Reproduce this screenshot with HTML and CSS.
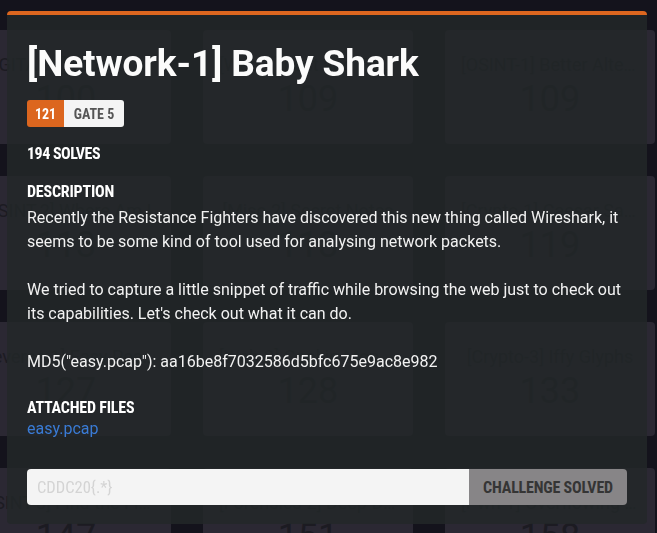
FILE: index.html
```html
<!DOCTYPE html>
<html lang="en">
<head>
<meta charset="utf-8">
<title>[Network-1] Baby Shark</title>
<link rel="stylesheet" href="styles.css">
</head>
<body>
<div class="board">
  <div class="card"><div class="c-title">[DIGITAL-1] Hidden Mess...</div><div class="c-pts">100</div></div>
  <div class="card"><div class="c-title">[Web-1] Lost and Found</div><div class="c-pts">109</div></div>
  <div class="card"><div class="c-title">[OSINT-1] Better Alter...</div><div class="c-pts">109</div></div>
  <div class="card"><div class="c-title">[OSINT-2] Where Am I</div><div class="c-pts">113</div></div>
  <div class="card"><div class="c-title">[Misc-2] Secret Notes</div><div class="c-pts">118</div></div>
  <div class="card"><div class="c-title">[Crypto-1] Caesar Salad</div><div class="c-pts">119</div></div>
  <div class="card"><div class="c-title">[Reverse-1] Easy Peasy</div><div class="c-pts">127</div></div>
  <div class="card"><div class="c-title">[Web-2] Cookie Monster</div><div class="c-pts">128</div></div>
  <div class="card"><div class="c-title">[Crypto-3] Iffy Glyphs</div><div class="c-pts">133</div></div>
  <div class="card"><div class="c-title">[OSINT-3] Find the Flag</div><div class="c-pts">147</div></div>
  <div class="card"><div class="c-title">[Forensics-2] Deep Dive</div><div class="c-pts">151</div></div>
  <div class="card"><div class="c-title">[Pwn-1] Overflowing Cup</div><div class="c-pts">158</div></div>
</div>

<div class="modal">
  <h1 class="title">[Network-1] Baby Shark</h1>
  <div class="tags"><span class="tag tag-pts">121</span><span class="tag tag-gate">GATE 5</span></div>
  <div class="solves">194 SOLVES</div>
  <div class="label label-desc">DESCRIPTION</div>
  <div class="desc">
    <p>Recently the Resistance Fighters have discovered this new thing called Wireshark, it seems to be some kind of tool used for analysing network packets.</p>
    <p>We tried to capture a little snippet of traffic while browsing the web just to check out its capabilities. Let's check out what it can do.</p>
    <p>MD5("easy.pcap"): aa16be8f7032586d5bfc675e9ac8e982</p>
  </div>
  <div class="label label-files">ATTACHED FILES</div>
  <a class="file" href="#">easy.pcap</a>
  <form class="flag">
    <input class="flag-input" type="text" placeholder="CDDC20{.*}">
    <button class="flag-btn" type="button">CHALLENGE SOLVED</button>
  </form>
</div>
</body>
</html>
```

FILE: styles.css
```css
* { box-sizing: border-box; }

html, body {
  margin: 0;
  padding: 0;
  height: 100%;
  overflow: hidden;
}

body {
  background: #14131c;
  font-family: Roboto, "Liberation Sans", sans-serif;
  color: #f2f2f2;
}

/* background challenge board */
.board {
  display: grid;
  grid-template-columns: repeat(3, 210px);
  grid-auto-rows: 114px;
  column-gap: 32px;
  row-gap: 32px;
  margin-left: -39px;
  padding-top: 30px;
  height: 533px;
  overflow: hidden;
}

.card {
  background: #2b2833;
  border-radius: 4px;
  padding-top: 23px;
  text-align: center;
  color: #1c1b22;
  overflow: hidden;
}

.c-title {
  font-size: 18px;
  line-height: 24px;
  white-space: nowrap;
  overflow: hidden;
  text-overflow: ellipsis;
  padding: 0 16px;
}

.c-pts {
  font-size: 36px;
  line-height: 44px;
}

/* modal */
.modal {
  position: fixed;
  top: 11px;
  left: 7px;
  width: 640px;
  background: rgba(34, 39, 41, 0.84);
  border-top: 4px solid #dc661f;
  border-radius: 4px;
  padding: 26px 20px 19px 20px;
}

.title {
  margin: 0;
  font-size: 37px;
  line-height: 46px;
  font-weight: 700;
  color: #fbfbfb;
  letter-spacing: -0.1px;
}

.tags {
  display: flex;
  margin-top: 13px;
  height: 27px;
}

.tag {
  display: flex;
  align-items: center;
  justify-content: center;
  font-size: 14px;
  font-weight: 700;
  font-stretch: 85%;
}

.tag-pts {
  width: 37px;
  background: #dc661f;
  color: #ffffff;
  border-radius: 3px 0 0 3px;
}

.tag-gate {
  width: 60px;
  background: #f4f4f4;
  color: #555555;
  border-radius: 0 3px 3px 0;
}

.solves,
.label {
  font-size: 16px;
  line-height: 20px;
  font-weight: 700;
  font-stretch: 85%;
  letter-spacing: -0.2px;
  color: #ffffff;
}

.solves { margin-top: 17px; letter-spacing: -0.5px; }
.label-desc { margin-top: 18px; }
.label-files { margin-top: 24px; }

.desc {
  margin-top: 4px;
  font-size: 16px;
  line-height: 24px;
  color: #f2f2f2;
}

.desc p { margin: 0 0 24px 0; }
.desc p:last-child { margin-bottom: 0; }

.file {
  display: block;
  margin-top: -1px;
  font-size: 16px;
  line-height: 24px;
  color: #3a7bd5;
  text-decoration: none;
}

.flag {
  display: flex;
  margin: 28px 0 0 0;
  height: 36px;
}

.flag-input {
  flex: 1;
  min-width: 0;
  border: none;
  outline: none;
  background: #f4f4f4;
  border-radius: 4px 0 0 4px;
  padding: 0 10px;
  font-family: Roboto, "Liberation Sans", sans-serif;
  font-size: 16.5px;
  font-stretch: 85%;
  color: #333;
}

.flag-input::placeholder { color: #d4d4d4; }

.flag-btn {
  width: 158px;
  border: none;
  background: #878587;
  color: #353535;
  border-radius: 0 4px 4px 0;
  font-family: Roboto, "Liberation Sans", sans-serif;
  font-size: 16px;
  font-weight: 700;
  font-stretch: 84%;
  letter-spacing: -0.2px;
  padding: 0;
}
```
